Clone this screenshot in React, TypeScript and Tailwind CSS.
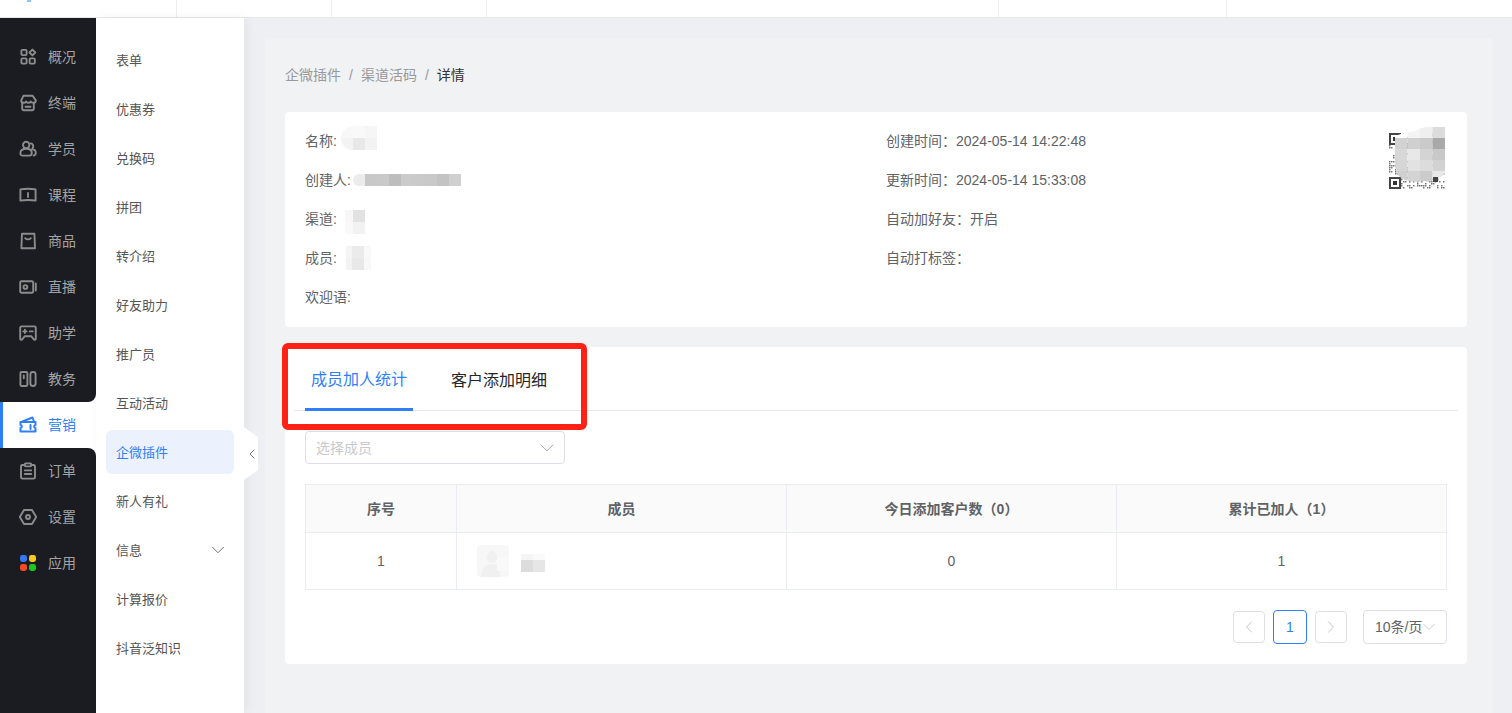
import React from 'react';
import { ChevronDown, ChevronLeft, ChevronRight } from 'lucide-react';

const strokeProps = {
  fill: 'none',
  stroke: 'currentColor',
  strokeWidth: 1.9,
  strokeLinejoin: 'round' as const,
  strokeLinecap: 'round' as const,
};

function NavIcon({ children }: { children: React.ReactNode }) {
  return (
    <svg width="18" height="18" viewBox="0 0 18 18" {...strokeProps} className="shrink-0">
      {children}
    </svg>
  );
}

const navTop = [
  {
    label: '概况',
    icon: (
      <>
        <rect x="2.400" y="1.900" width="5.200" height="5.200" rx="1" />
        <path d="M13.400 1.600l2.900 2.900-2.900 2.900-2.900-2.900z" />
        <rect x="2.400" y="10.400" width="5.200" height="5.200" rx="1" />
        <rect x="10.600" y="10.400" width="5.200" height="5.200" rx="1" />
      </>
    ),
  },
  {
    label: '终端',
    icon: (
      <>
        <path d="M4.400 1.800h9.200l3.200 4.600c0 1.600-1.200 2.400-2.600 2.400-1.200 0-2-.6-2.400-1.400-.5.8-1.200 1.400-2.300 1.400s-1.800-.6-2.300-1.400c-.5.8-1.300 1.400-2.500 1.400-1.400 0-2.500-.8-2.500-2.400z" />
        <path d="M3.200 9v5.600c0 1 .6 1.600 1.600 1.600h8.400c1 0 1.600-.6 1.600-1.600V9" />
        <path d="M6.500 12.800h5" />
      </>
    ),
  },
  {
    label: '学员',
    icon: (
      <>
        <circle cx="7.200" cy="5" r="3.200" />
        <path d="M11.400 3.400a2.800 2.800 0 0 1 2.200 4.600" />
        <path d="M1.400 13.400c0-3 2.400-4.600 5.800-4.600 3 0 5.600 1.400 5.600 4.200 0 1.800-1 2.600-2.400 2.600H3.400c-1.200 0-2-1-2-2.200z" />
        <path d="M13 9.200c2.200.2 3.800 1.600 3.800 3.600 0 1.600-.8 2.600-2.200 2.800" />
      </>
    ),
  },
  {
    label: '课程',
    icon: (
      <>
        <path d="M1.400 3.400c5-.8 10.200-.8 15.200 0v11.200c-5-.8-10.200-.8-15.200 0z" />
        <path d="M9 7v4" />
      </>
    ),
  },
  {
    label: '商品',
    icon: (
      <>
        <path d="M3 1.800h12.400l.6 14.400H2.400z" />
        <path d="M6.200 6.200c1.400 1.600 4.200 1.600 5.600 0" />
      </>
    ),
  },
  {
    label: '直播',
    icon: (
      <>
        <rect x="1.200" y="3.200" width="13" height="11.600" rx="1.400" />
        <circle cx="6.400" cy="9" r="1.900" />
        <path d="M16.800 5.400v7.200" />
      </>
    ),
  },
  {
    label: '助学',
    icon: (
      <>
        <path d="M2.600 2.400h12.800c.8 0 1.400.6 1.400 1.400v11c0 1-1.400 1.400-2 .6l-2.600-3.200H5.800l-2.600 3.200c-.6.800-2 .4-2-.6v-11c0-.8.600-1.400 1.400-1.400z" />
        <path d="M4.200 7.400h3.400M5.900 5.700v3.400M10.800 7.400h3" />
      </>
    ),
  },
  {
    label: '教务',
    icon: (
      <>
        <rect x="1.400" y="2" width="7" height="14" rx="1.200" />
        <rect x="11.400" y="2" width="5.200" height="14" rx="2.400" />
        <path d="M4.800 5.400v2.800" />
      </>
    ),
  },
];

const navBottom = [
  {
    label: '订单',
    icon: (
      <>
        <path d="M5.600 3H3.400c-.8 0-1.400.6-1.400 1.400v10.800c0 .8.600 1.400 1.400 1.400h11.200c.8 0 1.400-.6 1.400-1.400V4.400c0-.8-.6-1.400-1.400-1.400h-2.200" />
        <rect x="5.800" y="1.400" width="6.400" height="3" rx=".8" />
        <path d="M5.800 8.400h6.400M5.800 12h6.400" />
      </>
    ),
  },
  {
    label: '设置',
    icon: (
      <>
        <path d="M5 2h8l4.200 7-4.200 7H5L.8 9z" />
        <circle cx="9" cy="9" r="2" />
      </>
    ),
  },
];

const subItems = ['表单', '优惠券', '兑换码', '拼团', '转介绍', '好友助力', '推广员', '互动活动'];
const subItemsAfter = ['新人有礼'];

function SideItem({ label, icon }: { label: string; icon: React.ReactNode }) {
  return (
    <div className="h-[46px] flex items-center gap-[11px] pl-[19px] text-sm text-[#a3a3a3]">
      <span className="text-[#8c8c8c] flex">{icon}</span>
      {label}
    </div>
  );
}

function Sidebar() {
  return (
    <div className="w-24 shrink-0 flex flex-col bg-white">
      <div className="bg-[#1b1c22] rounded-br-lg pt-4">
        {navTop.map((item) => (
          <SideItem key={item.label} label={item.label} icon={<NavIcon>{item.icon}</NavIcon>} />
        ))}
      </div>
      <div className="h-[46px] flex items-center gap-[11px] pl-4 border-l-[3px] border-[#2f7ff7] text-sm text-[#2f7ff7] bg-white">
        <svg width="18" height="18" viewBox="0 0 18 18" fill="none" stroke="currentColor" strokeWidth="2" strokeLinejoin="round" strokeLinecap="round" className="shrink-0">
          <path d="M1.500 6h15v3c-1 .3-1.400.9-1.400 1.600s.4 1.300 1.400 1.600v3.300H1.500v-3.300c1-.3 1.400-.9 1.400-1.600s-.4-1.300-1.400-1.600z" />
          <path d="M3.500 5.500l10-4 1.500 4" />
          <path d="M11.500 9v4" />
        </svg>
        营销
      </div>
      <div className="flex-1 bg-[#1b1c22] rounded-tr-lg">
        {navBottom.map((item) => (
          <SideItem key={item.label} label={item.label} icon={<NavIcon>{item.icon}</NavIcon>} />
        ))}
        <SideItem
          label="应用"
          icon={
            <svg width="18" height="18" viewBox="0 0 18 18" className="shrink-0">
              <rect x="1" y="1" width="7" height="7" rx="2.400" fill="#3478f6" />
              <rect x="10" y="1" width="7" height="7" rx="2.400" fill="#fdc81e" />
              <rect x="1" y="10" width="7" height="7" rx="2.400" fill="#f9491f" />
              <rect x="10" y="10" width="7" height="7" rx="2.400" fill="#19c91e" />
            </svg>
          }
        />
      </div>
    </div>
  );
}

function SubMenu() {
  const row = 'h-11 mb-[5px] flex items-center pl-[10px] pt-[2px] text-[13px] text-[#555]';
  return (
    <div className="w-[148px] shrink-0 bg-white pt-5 px-[10px] relative z-10 shadow-[3px_0_10px_rgba(0,0,0,0.05)]">
      {subItems.map((s) => (
        <div key={s} className={row}>{s}</div>
      ))}
      <div className="h-11 mb-[5px] flex items-center pl-[10px] pt-[2px] text-[13px] text-[#2f7ff7] bg-[#ebf1fd] rounded-md">企微插件</div>
      {subItemsAfter.map((s) => (
        <div key={s} className={row}>{s}</div>
      ))}
      <div className={`${row} justify-between pr-[5px]`}>
        信息
        <ChevronDown size={22} strokeWidth={1} className="text-[#666] -mt-[2px]" />
      </div>
      <div className={row}>计算报价</div>
      <div className={row}>抖音泛知识</div>

      {/* collapse handle */}
      <div className="absolute left-[148px] top-[409px] w-[14px] h-[53px]">
        <svg width="14" height="53" viewBox="0 0 14 53" className="absolute inset-0">
          <path d="M0 0l14 10v33L0 53z" fill="#fff" />
        </svg>
        <ChevronLeft size={16} strokeWidth={1.5} className="absolute left-0 top-[19px] text-[#777]" />
      </div>
    </div>
  );
}

// pixelated bits that hide names in the picture
function Blocks({ cols, cells, className }: { cols: string; cells: string[]; className: string }) {
  return (
    <div className={`grid shrink-0 ${cols} ${className}`}>
      {cells.map((c, i) => (
        <div key={i} className={c} />
      ))}
    </div>
  );
}

function InfoRow({ children }: { children: React.ReactNode }) {
  return <div className="h-[39px] flex items-center text-sm text-[#606266]">{children}</div>;
}

function Qr() {
  const dots: React.ReactNode[] = [];
  let seed = 17;
  for (let y = 0; y < 28; y++) {
    for (let x = 0; x < 28; x++) {
      seed = (seed * 73 + 41) % 1009;
      if (seed % 5 < 2) dots.push(<rect key={`${x}-${y}`} x={x * 2} y={y * 2} width="1.500" height="1.500" fill="#777" />);
    }
  }
  const finder = (x: number, y: number) => (
    <g>
      <rect x={x} y={y} width="12" height="12" fill="#fff" />
      <rect x={x + 1} y={y + 1} width="10" height="10" fill="none" stroke="#444" strokeWidth="2" />
      <rect x={x + 4} y={y + 4} width="4" height="4" fill="#333" />
    </g>
  );
  const shade = [
    ['#ffffff', '#f4f4f4', '#efefef', '#dcdcdc'],
    ['#d2d2d2', '#d0d0d0', '#cacaca', '#a9a9a9'],
    ['#d8d8d8', '#e8e8e8', '#d4d4d4', '#c8c8c8'],
    ['#d6d6d6', '#e2e2e2', '#dcdcdc', '#d2d2d2'],
    ['#d0d0d0', '#d4d4d4', '#cccccc', '#e8e8e8'],
  ];
  return (
    <svg width="56" height="62" viewBox="0 -6 56 62" className="shrink-0 mt-[6px]">
      {dots}
      {finder(0, 0)}
      {finder(0, 44)}
      <clipPath id="qr-blur">
        <path d="M6 4C14 -2 26 0 30 -4C40 -8 50 -6 56 -6V40C50 46 44 50 36 48C24 50 12 48 8 40C4 30 6 14 6 4z" />
      </clipPath>
      <g clipPath="url(#qr-blur)">
        {shade.map((r, j) =>
          r.map((c, i) => <rect key={`${i}-${j}`} x={6 + i * 12.5} y={-6 + j * 11} width="12.500" height="11" fill={c} />)
        )}
      </g>
      <rect x="44" y="44" width="5" height="5" fill="#444" />
    </svg>
  );
}

function InfoCard() {
  return (
    <div className="bg-white rounded flex pl-5 pr-[22px] pt-[9px] pb-[11px] mb-5">
      <div className="w-[581px] shrink-0">
        <InfoRow>
          名称:
          <Blocks
            cols="grid-cols-[12px_12px_12px]"
            cells={['h-3 bg-[#f8f8f8]', 'h-3 bg-[#f9f9f9]', 'h-3 bg-[#f6f6f6]', 'h-3 bg-[#f3f3f3]', 'h-3 bg-[#e8e8e8]', 'h-3 bg-[#f3f3f3]']}
            className="ml-1 mt-[-6px] rounded-l-full overflow-hidden"
          />
        </InfoRow>
        <InfoRow>
          创建人:
          <Blocks
            cols="grid-cols-[repeat(9,12px)]"
            cells={[
              'h-3 bg-[#ececec]', 'h-3 bg-[#c8c8c8]', 'h-3 bg-[#c9c9c9]', 'h-3 bg-[#bdbdbd]', 'h-3 bg-[#cbcbcb]',
              'h-3 bg-[#cacaca]', 'h-3 bg-[#c9c9c9]', 'h-3 bg-[#c3c3c3]', 'h-3 bg-[#d0d0d0]',
            ]}
            className="ml-[2px] rounded-l-full overflow-hidden"
          />
        </InfoRow>
        <InfoRow>
          渠道:
          <Blocks
            cols="grid-cols-[8px_12px]"
            cells={['h-3 bg-[#f7f7f7]', 'h-3 bg-[#e2e2e2]', 'h-3 bg-[#f9f9f9]', 'h-3 bg-[#f2f2f2]']}
            className="ml-2 mt-[6px]"
          />
        </InfoRow>
        <InfoRow>
          成员:
          <Blocks
            cols="grid-cols-[6px_12px_7px]"
            cells={['h-3 bg-[#f5f5f5]', 'h-3 bg-[#ebebeb]', 'h-3 bg-[#f9f9f9]', 'h-3 bg-[#f3f3f3]', 'h-3 bg-[#e8e8e8]', 'h-3 bg-[#f8f8f8]']}
            className="ml-[9px]"
          />
        </InfoRow>
        <InfoRow>欢迎语:</InfoRow>
      </div>
      <div className="flex-1">
        <InfoRow>创建时间：2024-05-14 14:22:48</InfoRow>
        <InfoRow>更新时间：2024-05-14 15:33:08</InfoRow>
        <InfoRow>自动加好友：开启</InfoRow>
        <InfoRow>自动打标签：</InfoRow>
      </div>
      <Qr />
    </div>
  );
}

function MemberTable() {
  const th = 'border border-[#e9ecf3] bg-[#fafafa] h-12 text-sm font-bold text-[#606266] text-center';
  const td = 'border border-[#e9ecf3] h-[57px] text-sm text-[#606266] text-center';
  return (
    <table className="w-[1142px] table-fixed border-collapse">
      <thead>
        <tr>
          <th className={`${th} w-[151px]`}>序号</th>
          <th className={`${th} w-[330px]`}>成员</th>
          <th className={`${th} w-[330px]`}>今日添加客户数（0）</th>
          <th className={th}>累计已加人（1）</th>
        </tr>
      </thead>
      <tbody>
        <tr>
          <td className={td}>1</td>
          <td className={td}>
            <div className="flex items-center gap-3 pl-5">
              <div className="w-8 h-8 rounded bg-[#f7f7f7] relative overflow-hidden">
                <svg width="32" height="32" viewBox="0 0 32 32" className="absolute inset-0">
                  <ellipse cx="15" cy="12" rx="5" ry="6" fill="#f0f0f0" />
                  <path d="M4 32c0-9 4-13 11-13s8 4 8 13z" fill="#f0f0f0" />
                  <rect x="20" y="12" width="12" height="14" fill="#f9f9f9" />
                </svg>
              </div>
              <Blocks
                cols="grid-cols-[12px_12px]"
                cells={['h-[6px] bg-[#f5f5f5]', 'h-[6px] bg-[#fafafa]', 'h-3 bg-[#dcdcdc]', 'h-3 bg-[#e6e6e6]']}
                className="mt-[4px]"
              />
            </div>
          </td>
          <td className={td}>0</td>
          <td className={td}>1</td>
        </tr>
      </tbody>
    </table>
  );
}

function Pagination() {
  return (
    <div className="flex justify-end items-center mt-5 w-[1142px] text-sm">
      <div className="w-8 h-8 border border-[#dcdfe6] rounded flex items-center justify-center text-[#c0c4cc]">
        <ChevronLeft size={20} strokeWidth={1.2} />
      </div>
      <div className="w-[34px] h-[34px] ml-2 border border-[#2f7ff7] rounded flex items-center justify-center text-[#2f7ff7]">1</div>
      <div className="w-8 h-8 ml-2 border border-[#dcdfe6] rounded flex items-center justify-center text-[#c0c4cc]">
        <ChevronRight size={20} strokeWidth={1.2} />
      </div>
      <div className="w-[84px] h-[34px] ml-4 pl-[11px] border border-[#dcdfe6] rounded flex items-center text-[#606266]">
        10条/页
        <ChevronDown size={20} strokeWidth={1.1} className="text-[#c0c4cc] -ml-[3px] shrink-0" />
      </div>
    </div>
  );
}

function DetailCard() {
  return (
    <div className="bg-white rounded relative h-[317px] pl-5">
      <div className="h-[64px] -ml-[11px] mr-[9px] pl-[11px] border-b border-[#e8e8e8] flex items-end gap-8">
        <div className="h-[61px] px-[6px] pt-[2px] -mb-px flex items-center text-base text-[#2f7ff7] border-b-[3px] border-[#2f7ff7]">成员加人统计</div>
        <div className="h-[61px] px-[6px] -mb-px flex items-center text-base text-[#262626]">客户添加明细</div>
      </div>
      <div className="w-[260px] h-[33px] mt-5 pl-[10px] pr-[5px] border border-[#dcdfe6] rounded flex items-center justify-between text-sm text-[#c8c9cc]">
        选择成员
        <ChevronDown size={24} strokeWidth={1} className="text-[#b0b3b8]" />
      </div>
      <div className="mt-5">
        <MemberTable />
        <Pagination />
      </div>

      {/* red annotation round the tabs */}
      <div className="absolute -left-[3px] -top-[4px] w-[305px] h-[87px] border-[6px] border-[#fe2116] rounded-md" />
    </div>
  );
}

export default function App() {
  return (
    <div className="h-[713px] overflow-hidden flex flex-col bg-white font-['Liberation_Sans','Noto_Sans_CJK_SC',sans-serif]">
      <div className="h-[18px] shrink-0 flex border-b border-[#e8e8e8] bg-white relative">
        <div className="w-[177px] border-r border-[#eeeeee]" />
        <div className="w-[155px] border-r border-[#eeeeee]" />
        <div className="w-[155px] border-r border-[#eeeeee]" />
        <div className="w-[512px] border-r border-[#eeeeee]" />
        <div className="w-[228px] border-r border-[#eeeeee]" />
        <div className="absolute left-[27px] top-0 w-1 h-[2px] bg-[#8cc4ff]" />
      </div>
      <div className="flex-1 flex min-h-0">
        <Sidebar />
        <SubMenu />
        <div className="flex-1 bg-[#eeeff2] pt-5 pl-[21px] pr-[19px]">
          <div className="h-full bg-[#f1f2f4] pt-[27px] pl-5 pr-[26px]">
            <div className="h-5 mb-[27px] flex items-center text-sm text-[#999]">
              企微插件<span className="mx-2">/</span>渠道活码<span className="mx-2">/</span>
              <span className="text-[#333]">详情</span>
            </div>
            <InfoCard />
            <DetailCard />
          </div>
        </div>
      </div>
    </div>
  );
}
